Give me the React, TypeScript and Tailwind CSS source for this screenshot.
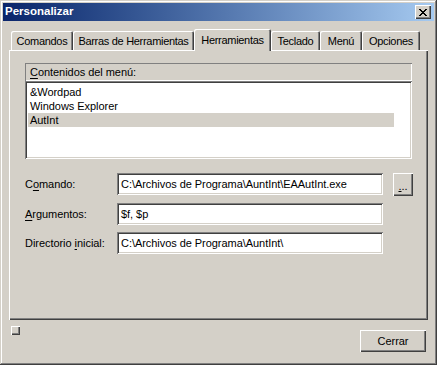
import React from 'react';

const raised =
  'shadow-[inset_1px_1px_0_#ffffff,inset_-1px_-1px_0_#404040,inset_-2px_-2px_0_#808080]';
const sunken =
  'shadow-[inset_1px_1px_0_#808080,inset_-1px_-1px_0_#ffffff,inset_2px_2px_0_#404040,inset_-2px_-2px_0_#d4d0c8]';

const tabs = [
  { label: 'Comandos', w: 'w-[62px]' },
  { label: 'Barras de Herramientas', w: 'w-[121px]' },
  { label: 'Herramientas', w: 'w-[77px]', active: true },
  { label: 'Teclado', w: 'w-[49px]' },
  { label: 'Menú', w: 'w-[42px]' },
  { label: 'Opciones', w: 'w-[58px]' },
];

const items = ['&Wordpad', 'Windows Explorer', 'AutInt'];

const fields = [
  { pre: 'C', u: 'o', post: 'mando:', value: 'C:\\Archivos de Programa\\AuntInt\\EAAutInt.exe' },
  { pre: '', u: 'A', post: 'rgumentos:', value: '$f, $p' },
  { pre: 'Directorio ', u: 'i', post: 'nicial:', value: 'C:\\Archivos de Programa\\AuntInt\\' },
];

export default function App() {
  return (
    <div
      className="w-[437px] h-[365px] bg-[#d4d0c8] p-[3px] flex flex-col text-[11px] tracking-[-0.05px] text-black shadow-[inset_-1px_-1px_0_#404040,inset_1px_1px_0_#d4d0c8,inset_-2px_-2px_0_#808080,inset_2px_2px_0_#ffffff]"
      style={{ fontFamily: '"Liberation Sans", Arial, sans-serif' }}
    >
      {/* title bar */}
      <div className="h-[18px] flex items-center justify-between bg-gradient-to-r from-[#0a246a] to-[#a6caf0] pl-[2px] pr-[3px]">
        <span className="text-white font-bold text-[11.5px] tracking-normal">Personalizar</span>
        <button className={`w-[16px] h-[14px] bg-[#d4d0c8] flex items-center justify-center ${raised}`}>
          <svg width="8" height="7" viewBox="0 0 8 7" shapeRendering="crispEdges">
            <path
              d="M0 0h2v1h-2zM6 0h2v1h-2zM1 1h2v1h-2zM5 1h2v1h-2zM2 2h4v1h-4zM3 3h2v1h-2zM2 4h4v1h-4zM1 5h2v1h-2zM5 5h2v1h-2zM0 6h2v1h-2zM6 6h2v1h-2z"
              fill="#000"
            />
          </svg>
        </button>
      </div>

      {/* tabs */}
      <div className="mt-[8px] ml-[8px] h-[21px] flex items-start relative z-10 tracking-[-0.3px]">
        {tabs.map((t) =>
          t.active ? (
            <div
              key={t.label}
              className={`${t.w} h-[22px] bg-[#d4d0c8] rounded-t-[2px] flex items-start justify-center pt-[3px] shadow-[inset_1px_1px_0_#ffffff,inset_-1px_0_0_#404040,inset_-2px_0_0_#808080]`}
            >
              {t.label}
            </div>
          ) : (
            <div
              key={t.label}
              className={`${t.w} mt-[2px] h-[19px] rounded-t-[2px] flex items-center justify-center pt-[1px] shadow-[inset_1px_1px_0_#ffffff,inset_-1px_0_0_#404040,inset_-2px_0_0_#808080]`}
            >
              {t.label}
            </div>
          )
        )}
      </div>

      {/* tab body */}
      <div className="mx-[6px] h-[270px] pt-[13px] pl-[16px] flex flex-col shadow-[inset_1px_1px_0_#ffffff,inset_-1px_-1px_0_#404040,inset_-2px_-2px_0_#808080]">
        <div className="w-[387px] h-[18px] border-t border-l border-[#808080] shadow-[inset_-1px_-1px_0_#ffffff] flex items-center pl-[4px]">
          <span>
            <span className="underline underline-offset-2">C</span>ontenidos del menú:
          </span>
        </div>
        <div className={`w-[387px] h-[78px] bg-white pt-[4px] pl-[3px] ${sunken}`}>
          {items.map((it, i) => (
            <div
              key={it}
              className={`h-[14px] w-[366px] flex items-center pl-[2px] ${i === 2 ? 'bg-[#d4d0c8]' : ''}`}
            >
              {it}
            </div>
          ))}
        </div>

        <div className="mt-[14px] flex flex-col gap-[7px]">
          {fields.map((f, i) => (
            <div key={i} className="flex items-start">
              <label className="w-[92px] h-[22px] flex items-center">
                <span>
                  {f.pre}
                  <span className="underline underline-offset-2">{f.u}</span>
                  {f.post}
                </span>
              </label>
              <div className={`w-[266px] h-[22px] bg-white flex items-center pl-[4px] ${sunken}`}>
                {f.value}
              </div>
              {i === 0 && (
                <button
                  className={`ml-[10px] w-[20px] h-[23px] bg-[#d4d0c8] flex items-center justify-center pt-[4px] ${raised}`}
                >
                  <span>
                    <span className="underline underline-offset-1">.</span>..
                  </span>
                </button>
              )}
            </div>
          ))}
        </div>
      </div>

      {/* bottom */}
      <div className="flex items-start justify-between pl-[8px] pr-[8px]">
        <div className={`mt-[6px] w-[9px] h-[9px] bg-[#d4d0c8] ${raised}`} />
        <button className={`mt-[10px] w-[66px] h-[22px] bg-[#d4d0c8] flex items-center justify-center ${raised}`}>
          Cerrar
        </button>
      </div>
    </div>
  );
}
